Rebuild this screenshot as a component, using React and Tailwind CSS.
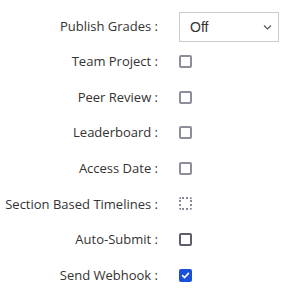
import React from "react";

const rows = [
  { label: "Team Project :", kind: "box" },
  { label: "Peer Review :", kind: "box" },
  { label: "Leaderboard :", kind: "box" },
  { label: "Access Date :", kind: "box" },
  { label: "Section Based Timelines :", kind: "dotted" },
  { label: "Auto-Submit :", kind: "dark" },
  { label: "Send Webhook :", kind: "checked" },
];

function Box({ kind }) {
  if (kind === "checked") {
    return (
      <div className="w-[13px] h-[13px] rounded-[2px] bg-[#1a4fd8] flex items-center justify-center">
        <svg width="9" height="9" viewBox="0 0 10 10">
          <path d="M1.8 5.2 L4 7.3 L8.3 2.6" fill="none" stroke="#fff" strokeWidth="1.8" strokeLinecap="round" strokeLinejoin="round" />
        </svg>
      </div>
    );
  }
  const cls =
    kind === "dotted"
      ? "border-2 border-dotted border-[#8a8898]"
      : kind === "dark"
      ? "border-2 border-[#5e5d6b]"
      : "border-2 border-[#8f8d9c]";
  return <div className={`w-[13px] h-[13px] rounded-[2px] bg-white ${cls}`} />;
}

export default function App() {
  return (
    <div className="w-[292px] h-[295px] bg-white pt-[12px]" style={{ fontFamily: "'Open Sans', sans-serif" }}>
      <div className="grid grid-cols-[158px_1fr] gap-x-[21px]">
        <div className="h-[30px] flex items-center justify-end text-[13px] text-[#333]">Publish Grades :</div>
        <div className="h-[30px] w-[100px] border border-[#cccccc] flex items-center justify-between pl-[10px] pr-[5px] text-[14px] text-[#333]" style={{ fontFamily: "'Liberation Sans', Arial, sans-serif" }}>
          <span>Off</span>
          <svg width="11" height="10" viewBox="0 0 11 10">
            <path d="M2 3.5 L5.5 7 L9 3.5" fill="none" stroke="#555" strokeWidth="1.2" />
          </svg>
        </div>
        {rows.map((r, i) => (
          <React.Fragment key={i}>
            <div className={`h-[35.6px] pt-[1px] flex items-center justify-end text-[13px] text-[#333] ${i === 0 ? "mt-[1.7px]" : ""}`}>{r.label}</div>
            <div className={`h-[35.6px] flex items-center ${i === 0 ? "mt-[1.7px]" : ""}`}>
              <Box kind={r.kind} />
            </div>
          </React.Fragment>
        ))}
      </div>
    </div>
  );
}
